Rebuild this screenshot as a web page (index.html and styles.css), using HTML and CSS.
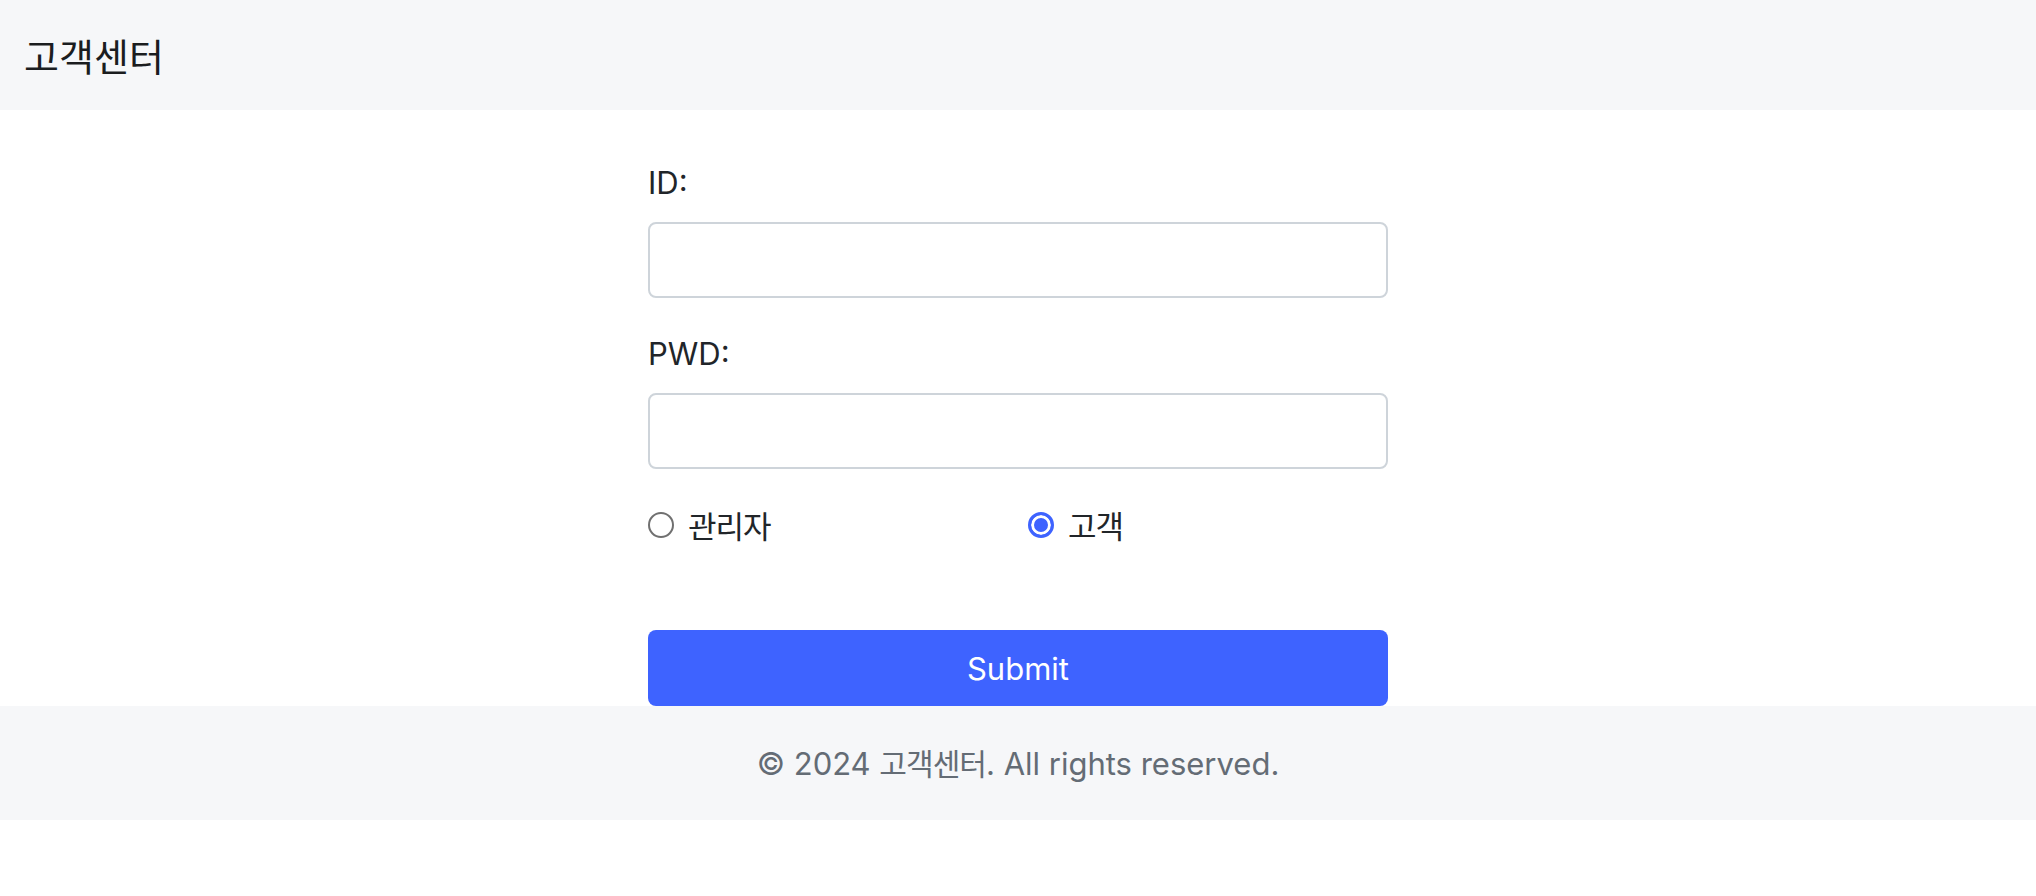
FILE: index.html
```html
<!DOCTYPE html>
<html lang="ko">
<head>
<meta charset="utf-8">
<title>고객센터</title>
<link rel="stylesheet" href="styles.css">
</head>
<body>
<header class="site-header">
  <span class="brand">고객센터</span>
</header>
<main class="main">
  <form class="login-form">
    <div class="field">
      <label class="field-label" for="user-id">ID:</label>
      <input class="field-input" id="user-id" type="text">
    </div>
    <div class="field">
      <label class="field-label" for="user-pwd">PWD:</label>
      <input class="field-input" id="user-pwd" type="password">
    </div>
    <div class="role-row">
      <label class="role">
        <input class="role-radio" type="radio" name="role" value="admin">
        <span class="role-text">관리자</span>
      </label>
      <label class="role">
        <input class="role-radio" type="radio" name="role" value="customer" checked>
        <span class="role-text">고객</span>
      </label>
    </div>
    <button class="submit-btn" type="submit">Submit</button>
  </form>
</main>
<footer class="site-footer">
  <p class="copy">© 2024 <span class="ko">고객센터</span>. All rights reserved.</p>
</footer>
</body>
</html>
```
FILE: styles.css
```css
* {
  box-sizing: border-box;
}

body {
  margin: 0;
  font-family: "Inter", "Noto Sans CJK KR", sans-serif;
  color: #212529;
  background: #ffffff;
}

.site-header {
  height: 110px;
  background: #f6f7f9;
  display: flex;
  align-items: center;
  padding-left: 24px;
}

.brand {
  font-family: "Noto Sans CJK KR", sans-serif;
  font-size: 38px;
  line-height: 1;
  color: #1b1d1f;
}

.main {
  padding-top: 49px;
}

.login-form {
  width: 740px;
  margin: 0 auto;
}

.field {
  margin-bottom: 32px;
}

.field-label {
  display: block;
  font-size: 31px;
  line-height: 48px;
  margin-bottom: 15px;
}

.field-input {
  display: block;
  width: 100%;
  height: 76px;
  border: 2px solid #ced4da;
  border-radius: 8px;
  background: #fff;
  font-size: 31px;
  padding: 0 20px;
}

.role-row {
  display: grid;
  grid-template-columns: 380px 1fr;
  height: 48px;
  align-items: center;
  margin-bottom: 81px;
}

.role {
  display: flex;
  align-items: center;
  gap: 14px;
}

.role-radio {
  appearance: none;
  -webkit-appearance: none;
  margin: 0;
  width: 26px;
  height: 26px;
  border-radius: 50%;
  border: 2px solid #707070;
  background: #fff;
}

.role-radio:checked {
  border: 3px solid #3e63ff;
  background: #3e63ff;
  box-shadow: inset 0 0 0 3px #fff;
}

.role-text {
  font-family: "Noto Sans CJK KR", sans-serif;
  font-size: 31px;
  letter-spacing: -1px;
  line-height: 48px;
}

.submit-btn {
  display: block;
  width: 100%;
  height: 76px;
  border: 0;
  border-radius: 8px;
  background: #3e63ff;
  color: #ffffff;
  font-family: "Inter", "Noto Sans CJK KR", sans-serif;
  font-size: 31px;
}

.site-footer {
  background: #f6f7f9;
  padding: 32px 0;
  text-align: center;
}

.copy {
  margin: 0;
  font-size: 31px;
  line-height: 48px;
  color: #646c75;
}

.ko {
  font-family: "Noto Sans CJK KR", sans-serif;
  font-size: 0.97em;
  letter-spacing: -1px;
}
```
